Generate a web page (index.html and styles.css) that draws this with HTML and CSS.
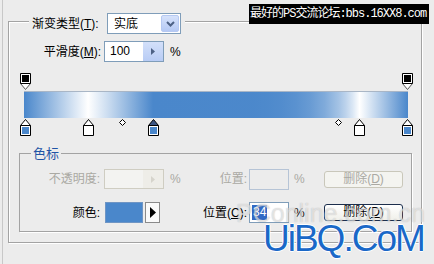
FILE: index.html
```html
<!DOCTYPE html>
<html>
<head>
<meta charset="utf-8">
<link rel="stylesheet" href="styles.css">
</head>
<body>
<div class="window">
  <div class="group">
    <div class="head">
      <span class="lbl-type">渐变类型(<u>T</u>):</span>
      <div class="select">
        <span class="select-val">实底</span>
        <span class="select-btn"><svg width="9" height="6" viewBox="0 0 9 6"><path d="M1 1 L4.5 4.5 L8 1" fill="none" stroke="#4d6185" stroke-width="2"/></svg></span>
      </div>
    </div>
    <div class="smooth">
      <span class="lbl-smooth">平滑度(<u>M</u>):</span>
      <div class="spin">
        <span class="spin-val">100</span>
        <span class="spin-btn"><svg width="4" height="7" viewBox="0 0 4 7"><path d="M0 0 L4 3.5 L0 7Z" fill="#4d6185"/></svg></span>
      </div>
      <span class="pct">%</span>
    </div>
    <div class="ramp">
      <div class="stops">
        <svg class="stop" style="left:0%" width="11" height="17" viewBox="0 0 11 17"><path d="M0.5 10.5 L5.5 16.5 L10.5 10.5Z" fill="#fff" stroke="#555"/><path d="M0.5 0.5H10.5V10.5H0.5Z" fill="#fff" stroke="#000"/><rect x="2" y="2" width="7" height="7" fill="#000"/></svg>
        <svg class="stop" style="left:100%" width="11" height="17" viewBox="0 0 11 17"><path d="M0.5 10.5 L5.5 16.5 L10.5 10.5Z" fill="#fff" stroke="#555"/><path d="M0.5 0.5H10.5V10.5H0.5Z" fill="#fff" stroke="#000"/><rect x="2" y="2" width="7" height="7" fill="#000"/></svg>
      </div>
      <div class="bar"></div>
      <div class="stops stops-bottom">
        <svg class="stop" style="left:0%" width="11" height="17" viewBox="0 0 11 17"><path d="M5.5 0.5 L10.5 6.5 H0.5Z" fill="#fff" stroke="#000"/><path d="M0.5 6.5H10.5V16.5H0.5Z" fill="#fff" stroke="#000"/><rect x="2" y="8" width="7" height="7" fill="#4a87cb"/></svg>
        <svg class="stop" style="left:16.5%" width="11" height="17" viewBox="0 0 11 17"><path d="M5.5 0.5 L10.5 6.5 H0.5Z" fill="#fff" stroke="#000"/><path d="M0.5 6.5H10.5V16.5H0.5Z" fill="#fff" stroke="#000"/><rect x="2" y="8" width="7" height="7" fill="#fff"/></svg>
        <svg class="mid" style="left:25.4%" width="7" height="7" viewBox="0 0 7 7"><path d="M3.5 0.5 L6.5 3.5 L3.5 6.5 L0.5 3.5Z" fill="#fff" stroke="#000"/></svg>
        <svg class="stop" style="left:33.6%" width="11" height="17" viewBox="0 0 11 17"><path d="M5.5 0.5 L10.5 6.5 H0.5Z" fill="#3b5584" stroke="#000"/><path d="M0.5 6.5H10.5V16.5H0.5Z" fill="#fff" stroke="#000"/><rect x="2" y="8" width="7" height="7" fill="#4a87cb"/></svg>
        <svg class="mid" style="left:82%" width="7" height="7" viewBox="0 0 7 7"><path d="M3.5 0.5 L6.5 3.5 L3.5 6.5 L0.5 3.5Z" fill="#fff" stroke="#000"/></svg>
        <svg class="stop" style="left:87.4%" width="11" height="17" viewBox="0 0 11 17"><path d="M5.5 0.5 L10.5 6.5 H0.5Z" fill="#fff" stroke="#000"/><path d="M0.5 6.5H10.5V16.5H0.5Z" fill="#fff" stroke="#000"/><rect x="2" y="8" width="7" height="7" fill="#fff"/></svg>
        <svg class="stop" style="left:100%" width="11" height="17" viewBox="0 0 11 17"><path d="M5.5 0.5 L10.5 6.5 H0.5Z" fill="#fff" stroke="#000"/><path d="M0.5 6.5H10.5V16.5H0.5Z" fill="#fff" stroke="#000"/><rect x="2" y="8" width="7" height="7" fill="#4a87cb"/></svg>
      </div>
    </div>
    <fieldset class="stopset">
      <legend>色标</legend>
      <div class="grid">
        <span class="lbl dis">不透明度:</span>
        <div class="spin spin-dis"><span class="spin-val"></span><span class="spin-btn"><svg width="4" height="7" viewBox="0 0 4 7"><path d="M0 0 L4 3.5 L0 7Z" fill="#d6d4cc"/></svg></span></div>
        <span class="pct1 dis">%</span>
        <span class="lbl2 dis">位置:</span>
        <div class="field field-dis"></div>
        <span class="pct2 dis">%</span>
        <div class="btn btn-dis">删除(<u>D</u>)</div>

        <span class="lbl">颜色:</span>
        <div class="color"><span class="swatch"></span><span class="arrow"><svg width="6" height="11" viewBox="0 0 6 11"><path d="M0 0 L6 5.5 L0 11Z" fill="#000"/></svg></span></div>
        <span class="pct1"></span>
        <span class="lbl2">位置(<u>C</u>):</span>
        <div class="field"><span class="sel">34</span></div>
        <span class="pct2">%</span>
        <div class="btn">删除(<u>D</u>)</div>
      </div>
    </fieldset>
  </div>
</div>
<div class="wm-top">最好的PS交流论坛:bbs.16XX8.com</div>
<div class="wm-pc">PConline.com.cn</div>
<div class="wm-uibq">UiBQ.CoM</div>
</body>
</html>
```
FILE: styles.css
```css
html, body {
  margin: 0;
  padding: 0;
}
body {
  width: 434px;
  height: 264px;
  overflow: hidden;
  position: relative;
  background: #ececec;
  font-family: "Liberation Sans", "Noto Sans CJK SC", sans-serif;
  font-size: 12px;
  line-height: 14px;
  color: #000;
}
u { text-decoration: underline; text-underline-offset: 1px; }

.window {
  margin-left: 2px;
  border-left: 1px solid #c8c8c8;
  height: 264px;
  box-sizing: border-box;
  padding: 21px 0 0 5px;
}
.group {
  width: 414px;
  height: 222px;
  box-sizing: border-box;
  border: 1px solid #a3a3a3;
  box-shadow: 1px 1px 0 #fff, inset 1px 1px 0 #fff;
}
.head {
  display: flex;
  align-items: center;
  width: max-content;
  height: 21px;
  margin: -9px 0 0 20px;
  padding: 0 4px 0 3px;
  background: #ececec;
}
.lbl-type { width: 75px; }
.select {
  width: 74px;
  height: 21px;
  box-sizing: border-box;
  border: 1px solid #7f9db9;
  background: #fff;
  display: flex;
  align-items: center;
  justify-content: space-between;
  padding: 1px;
}
.select-val { padding-left: 5px; }
.select-btn {
  width: 18px;
  height: 17px;
  box-sizing: border-box;
  border: 1px solid #b6c9f2;
  border-radius: 2px;
  background: linear-gradient(#d6e2fb, #b5c9f4);
  display: flex;
  align-items: center;
  justify-content: center;
}

.smooth {
  display: flex;
  align-items: center;
  height: 21px;
  margin-top: 7px;
}
.lbl-smooth { width: 92px; text-align: right; }
.spin {
  width: 60px;
  height: 21px;
  margin-left: 3px;
  box-sizing: border-box;
  border: 1px solid #7f9db9;
  background: #fff;
  display: flex;
}
.spin-val { flex: 1; padding-left: 5px; line-height: 19px; }
.spin-btn {
  width: 20px;
  background: linear-gradient(#d3e0fa, #b8ccf5);
  display: flex;
  align-items: center;
  justify-content: center;
}
.pct { margin-left: 6px; }

.ramp {
  width: 384px;
  margin: 11px 0 0 15px;
}
.stops {
  position: relative;
  height: 17px;
  margin: 0 1px;
}
.stops-bottom { margin-top: 1px; }
.stop {
  position: absolute;
  top: 0;
  margin-left: -5px;
  display: block;
}
.mid {
  position: absolute;
  top: 0;
  margin-left: -3px;
  display: block;
}
.bar {
  height: 27px;
  margin-top: 1px;
  box-sizing: border-box;
  border-top: 1px solid #a9b6c6;
  background: linear-gradient(to right, #4a87cb 0%, #ffffff 16.7%, 25.4%, #4a87cb 33.6%, 82%, #ffffff 87.4%, #4a87cb 100%);
}

.stopset {
  width: 393px;
  box-sizing: border-box;
  margin: 11px 0 0 10px;
  padding: 9px 0 8px 0;
  border: 1px solid #a3a3a3;
  box-shadow: 1px 1px 0 #fff;
  min-width: 0;
}
.stopset legend {
  margin-left: 11px;
  padding: 0 2px;
  font-size: 13px;
  line-height: 13px;
  color: #1f54a6;
}
.grid {
  display: grid;
  grid-template-columns: 84px 60px 16px 69px 40px 35px 79px;
  grid-template-rows: 20px 21px;
  row-gap: 13px;
  align-items: center;
}
.lbl { text-align: right; padding-right: 4px; }
.lbl2 { text-align: right; padding-right: 2px; }
.pct1 { padding-left: 6px; }
.pct2 { padding-left: 5px; }
.dis { color: #aaa9a3; }
.spin-dis {
  margin-left: 0;
  height: 20px;
  border-color: #cfcdc2;
  background: #f3f3f1;
}
.spin-dis .spin-btn { background: #eeede8; }
.field {
  height: 21px;
  box-sizing: border-box;
  border: 1px solid #7f9db9;
  background: #fff;
  padding: 2px 0 0 2px;
}
.field-dis {
  border-color: #b6c4d6;
  background: #ececec;
}
.sel {
  display: inline-block;
  background: #316ac5;
  color: #fff;
  line-height: 15px;
  padding: 0 1px;
}
.color {
  display: flex;
  margin-left: 1px;
  height: 21px;
}
.swatch {
  width: 38px;
  box-sizing: border-box;
  border: 1px solid #6f95c4;
  background: #4a87cb;
}
.arrow {
  width: 15px;
  margin-left: 2px;
  box-sizing: border-box;
  border: 1px solid #8a8a8a;
  background: #fafafa;
  display: flex;
  align-items: center;
  justify-content: center;
}
.btn {
  height: 17px;
  box-sizing: border-box;
  border: 1px solid #1c2e4c;
  border-radius: 3px;
  background: linear-gradient(#ffffff, #f0f0ea);
  text-align: center;
  line-height: 15px;
}
.btn-dis {
  border-color: #c9c7ba;
  background: #f4f4f0;
  color: #aaa9a3;
}

.wm-top {
  position: absolute;
  left: 249px;
  top: 4px;
  width: 180px;
  height: 20px;
  box-sizing: border-box;
  padding-left: 1px;
  background: #000;
  color: #fff;
  font-family: "Liberation Mono", "Noto Sans CJK SC", monospace;
  font-size: 12px;
  line-height: 20px;
  letter-spacing: -1px;
  white-space: nowrap;
}
.wm-pc {
  position: absolute;
  left: 236px;
  top: 198px;
  font-family: "Liberation Sans", sans-serif;
  font-size: 25px;
  line-height: 30px;
  color: rgba(255, 255, 255, 0.55);
  text-shadow: 0 0 1px rgba(110, 110, 110, 0.45);
  white-space: nowrap;
}
.wm-uibq {
  position: absolute;
  left: 263px;
  top: 220px;
  font-family: "Liberation Sans", sans-serif;
  font-size: 37px;
  line-height: 37px;
  letter-spacing: -2px;
  color: #1a68c8;
  text-shadow: 1px 0 #fff, -1px 0 #fff, 0 1px #fff, 0 -1px #fff;
  white-space: nowrap;
}
```
